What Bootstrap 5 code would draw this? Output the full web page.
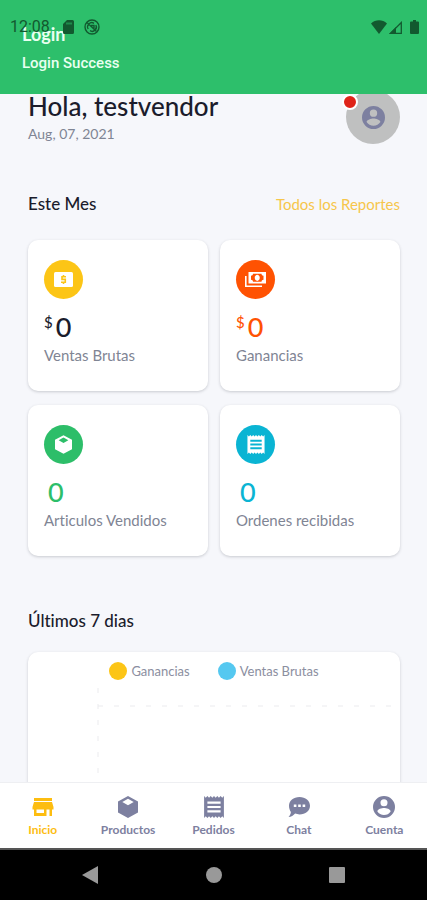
<!DOCTYPE html>
<html lang="es">
<head>
<meta charset="utf-8">
<meta name="viewport" content="width=device-width, initial-scale=1">
<title>Inicio</title>
<link href="https://cdn.jsdelivr.net/npm/bootstrap@5.3.0/dist/css/bootstrap.min.css" rel="stylesheet">
<style>
  :root { --ink: #1b1c2c; --muted: #7f8594; --slate: #7d80a0; --amber: #fcc516; --orange: #ff5202; --green: #2dbe69; --cyan: #0ab4d3; }
  body { font-family: "Lato", sans-serif; font-variant-ligatures: none; color: var(--ink); background: #f6f7fb; }
  svg { display: block; }
  .toast-bar { background: #2dbf6b; height: 94px; padding: 22px 22px 0; color: #e9fff1; font-size: 16px; line-height: 24px; font-weight: 700; }
  .toast-title { font-size: 18px; }
  .toast-text { font-family: "Roboto", sans-serif; font-size: 15px; line-height: 34px; font-weight: 500; }
  .status-bar { padding: 18px 8px 0 10px; color: #12592f; font: 400 16px/18px "Roboto", sans-serif; }
  .status-bar svg + svg { margin-left: 8px; }
  .status-bar .no-sync { margin-left: 6px; }
  .status-bar .signal { margin-left: 2px; }
  .screen { padding: 90px 27px 0 28px; }
  .greeting { font-size: 26px; line-height: 32px; font-weight: 500; }
  .day { font-size: 14px; line-height: 24px; color: var(--muted); }
  .avatar { width: 54px; height: 54px; background: #bfc0c0; color: var(--slate); }
  .alert-dot { width: 16px; height: 16px; top: 4px; left: -4px; background: #df2419; border: 2px solid #fff; }
  .heading { font-size: 17px; line-height: 24px; font-weight: 500; }
  .month { margin-top: 46px; margin-bottom: 24px; }
  .week { margin-top: 53px; margin-bottom: 19px; }
  .reports { color: #f6c64b; font-size: 15px; }
  .stats { --bs-gutter-x: 12px; --bs-gutter-y: 14px; }
  .tile { border: 0; border-radius: 10px; box-shadow: 0 1px 3px rgba(40, 45, 60, .22); }
  .stat { padding: 20px 16px 22px; }
  .disc { width: 39px; height: 39px; color: #fff; }
  .amount { font-size: 27px; line-height: 30px; margin-top: 13px; font-weight: 500; }
  .currency { font-size: 15px; line-height: 20px; margin-right: 3px; }
  .caption { font-size: 15px; line-height: 27px; color: var(--muted); }
  .bg-amber { background: var(--amber); } .bg-orange { background: var(--orange); }
  .bg-green { background: var(--green); } .bg-cyan { background: var(--cyan); }
  .text-orange { color: var(--orange); } .text-green { color: var(--green); } .text-cyan { color: var(--cyan); }
  .legend { padding-top: 9px; gap: 28px; font-size: 13px; line-height: 20px; color: #8b8ea0; }
  .key { width: 18px; height: 18px; }
  .bg-sky { background: #55c8f0; }
  .tabs { background: #fff; border-top: 1px solid #eeeff2; padding: 13px 0 9px; }
  .tabs a { flex: 1 1 0; color: var(--slate); font-size: 12px; line-height: 18px; font-weight: 700; gap: 3px; }
  .tabs a.active { color: #fdbd10; }
  .system { background: #000; border-top: 2px solid #555; color: #999; height: 52px; padding: 0 28px; }
  .system button { flex: 1 1 0; color: inherit; }
</style>
<script src="https://cdn.jsdelivr.net/npm/bootstrap@5.3.0/dist/js/bootstrap.bundle.min.js" defer></script>
</head>
<body class="vh-100 d-flex flex-column overflow-hidden position-relative">

<svg width="0" height="0" class="position-absolute" aria-hidden="true">
  <symbol id="person" viewBox="2 2 20 20"><path fill="currentColor" d="M12 2a10 10 0 1 0 0 20 10 10 0 0 0 0-20zm0 3a3.2 3.2 0 1 1 0 6.400 3.200 3.200 0 0 1 0-6.400zm0 14.200c-2.500 0-4.710-1.280-6-3.220.03-1.990 4-3.080 6-3.080s5.970 1.090 6 3.080a7.200 7.200 0 0 1-6 3.220z"/></symbol>
  <symbol id="box" viewBox="0 0 20 22"><path fill="currentColor" fill-rule="evenodd" d="M10 0l10 5.500v11L10 22 0 16.500v-11zM10 2.700L4.300 6 10 9.200 15.700 6z"/></symbol>
  <symbol id="receipt" viewBox="3 2 18 20"><path fill="currentColor" d="M18 17H6v-2h12v2zm0-4H6v-2h12v2zm0-4H6V7h12v2zM3 22l1.500-1.500L6 22l1.500-1.500L9 22l1.500-1.500L12 22l1.500-1.500L15 22l1.500-1.500L18 22l1.500-1.500L21 22V2l-1.500 1.500L18 2l-1.500 1.500L15 2l-1.500 1.500L12 2l-1.500 1.500L9 2 7.500 3.500 6 2 4.500 3.500 3 2z"/></symbol>
</svg>

<header class="toast-bar position-absolute top-0 start-0 w-100 z-3" role="status">
  <div class="toast-title">Login</div>
  <div class="toast-text">Login Success</div>
  <div class="status-bar position-absolute top-0 start-0 w-100 d-flex align-items-center">
    <span>12:08</span>
    <svg class="ms-2 me-1 flex-shrink-0" width="16" height="14" viewBox="-5 0 16 14"><path fill="currentColor" fill-rule="evenodd" d="M4 0h5.500A1.500 1.500 0 0 1 11 1.500v11A1.500 1.500 0 0 1 9.500 14h-8A1.500 1.500 0 0 1 0 12.500V4zM3.500 2.500v2h1v-2zm2 0v2h1v-2zm2 0v2h1v-2z"/></svg>
    <svg class="no-sync" width="16" height="16" viewBox="0 0 16 16" fill="none" stroke="currentColor"><circle cx="8" cy="8" r="7" stroke-width="1.400"/><path stroke-width="1.400" d="M4.200 10A4.200 4.200 0 0 1 10 4.300M11.800 6A4.200 4.200 0 0 1 6 11.700M3 3.500l9.500 9M7 6.500h3v3"/></svg>
    <svg class="ms-auto" width="16" height="14" viewBox="0 0 16 14"><path fill="currentColor" d="M8 14L0 3.500C4.500-.8 11.500-.8 16 3.500z"/></svg>
    <svg class="signal" width="13" height="13" viewBox="0 0 13 13"><path fill="none" stroke="currentColor" stroke-width="1.300" d="M12.300 1.500v10.800H1.500z"/><path fill="currentColor" d="M0 13h7V6z"/></svg>
    <svg width="9" height="14" viewBox="0 0 9 14"><path fill="currentColor" d="M3 0h3v1.400h2a1 1 0 0 1 1 1V13a1 1 0 0 1-1 1H1a1 1 0 0 1-1-1V2.400a1 1 0 0 1 1-1h2z"/></svg>
  </div>
</header>

<main class="screen flex-grow-1 overflow-hidden">
  <div class="d-flex justify-content-between">
    <div>
      <h1 class="greeting mb-0">Hola, testvendor</h1>
      <div class="day">Aug, 07, 2021</div>
    </div>
    <a href="#cuenta" aria-label="Cuenta" class="avatar rounded-circle position-relative d-flex align-items-center justify-content-center">
      <svg width="23" height="23"><use href="#person"/></svg>
      <span class="alert-dot rounded-circle position-absolute"></span>
    </a>
  </div>

  <div class="month d-flex justify-content-between align-items-center">
    <h2 class="heading mb-0">Este Mes</h2>
    <a href="#reportes" class="reports text-decoration-none">Todos los Reportes</a>
  </div>

  <div class="row row-cols-2 stats">
    <div class="col"><div class="card tile stat">
      <div class="disc bg-amber rounded-circle d-flex align-items-center justify-content-center">
        <svg width="19" height="15" viewBox="0 0 19 15"><rect width="19" height="15" rx="1.500" fill="#fff"/><path fill="none" stroke="#fcc516" stroke-width="1.600" d="M12 4.700H8v2.700h3.300v2.900H7M9.500 3v1.700m0 5.600V12"/></svg>
      </div>
      <div class="amount d-flex"><span class="currency">$</span><span>0</span></div>
      <div class="caption">Ventas Brutas</div>
    </div></div>
    <div class="col"><div class="card tile stat">
      <div class="disc bg-orange rounded-circle d-flex align-items-center justify-content-center">
        <svg width="21" height="15" viewBox="0 0 21 15"><path fill="#fff" d="M0 4h1.600v9.400H17V15H0z"/><rect x="3.500" width="17.500" height="11.500" fill="#fff"/><path fill="#ff5202" fill-rule="evenodd" d="M8 1.800h8.500c0 1.200.8 2 2 2v4c-1.200 0-2 .8-2 2H8c0-1.200-.8-2-2-2v-4c1.200 0 2-.8 2-2zm4.250.9c-1.400 0-2.500 1.300-2.500 3.100s1.100 3.100 2.500 3.100 2.500-1.300 2.500-3.100-1.100-3.100-2.500-3.100z"/></svg>
      </div>
      <div class="amount d-flex text-orange"><span class="currency">$</span><span>0</span></div>
      <div class="caption">Ganancias</div>
    </div></div>
    <div class="col"><div class="card tile stat">
      <div class="disc bg-green rounded-circle d-flex align-items-center justify-content-center">
        <svg width="17" height="19"><use href="#box"/></svg>
      </div>
      <div class="amount d-flex text-green"><span class="ms-1">0</span></div>
      <div class="caption">Articulos Vendidos</div>
    </div></div>
    <div class="col"><div class="card tile stat">
      <div class="disc bg-cyan rounded-circle d-flex align-items-center justify-content-center">
        <svg width="18" height="19"><use href="#receipt"/></svg>
      </div>
      <div class="amount d-flex text-cyan"><span class="ms-1">0</span></div>
      <div class="caption">Ordenes recibidas</div>
    </div></div>
  </div>

  <h2 class="heading week">Últimos 7 dias</h2>
  <div class="card tile">
    <div class="legend d-flex justify-content-center">
      <span class="d-flex align-items-center gap-1"><span class="key bg-amber rounded-circle"></span>Ganancias</span>
      <span class="d-flex align-items-center gap-1"><span class="key bg-sky rounded-circle"></span>Ventas Brutas</span>
    </div>
    <svg class="w-100" height="180" aria-hidden="true"><path d="M70 7v170M70 25h298" fill="none" stroke="#ebebee" stroke-width="1" stroke-dasharray="5 11"/></svg>
  </div>
</main>

<nav class="tabs d-flex flex-shrink-0 position-relative">
  <a href="#inicio" class="active text-decoration-none d-flex flex-column align-items-center" aria-current="page">
    <svg width="22" height="22" viewBox="0 0 22 22"><path fill="currentColor" fill-rule="evenodd" d="M2 2h18v3H2zM2 6h18l1.500 5v2.500H20V20h-2.500v-6.500h-3V20H2v-6.500H.5V11zm2.500 7.500V17H12v-3.500z"/></svg>
    Inicio</a>
  <a href="#productos" class="text-decoration-none d-flex flex-column align-items-center">
    <svg width="22" height="22"><use href="#box"/></svg>
    Productos</a>
  <a href="#pedidos" class="text-decoration-none d-flex flex-column align-items-center">
    <svg width="22" height="22"><use href="#receipt"/></svg>
    Pedidos</a>
  <a href="#chat" class="text-decoration-none d-flex flex-column align-items-center">
    <svg width="22" height="22" viewBox="0 0 22 22"><path fill="currentColor" fill-rule="evenodd" d="M11.500 1C17.500 1 22 4.800 22 9.700s-4.500 8.700-10.500 8.700c-1.600 0-3.100-.3-4.400-.8C5.500 19.500 3.200 21 .5 21c1.300-1.300 2.200-3 2.400-5C1.700 14.300 1 12 1 9.700 1 4.800 5.500 1 11.500 1zM5.800 8.400v2.600h2.600V8.400zm4.400 0v2.600h2.600V8.400zm4.400 0v2.600h2.600V8.400z"/></svg>
    Chat</a>
  <a href="#cuenta" class="text-decoration-none d-flex flex-column align-items-center">
    <svg width="22" height="22"><use href="#person"/></svg>
    Cuenta</a>
</nav>
<div class="system d-flex flex-shrink-0">
  <button type="button" class="btn p-0 border-0 rounded-0 d-flex align-items-center justify-content-center" aria-label="Atrás"><svg width="20" height="20" viewBox="0 0 20 20"><path fill="currentColor" d="M18 1v18L2 10z"/></svg></button>
  <button type="button" class="btn p-0 border-0 rounded-0 d-flex align-items-center justify-content-center" aria-label="Inicio del sistema"><svg width="18" height="18" viewBox="0 0 18 18"><circle cx="9" cy="9" r="8" fill="currentColor"/></svg></button>
  <button type="button" class="btn p-0 border-0 rounded-0 d-flex align-items-center justify-content-center" aria-label="Recientes"><svg width="18" height="18" viewBox="0 0 18 18"><rect x="1" y="1" width="16" height="16" rx="1" fill="currentColor"/></svg></button>
</div>
</body>
</html>
